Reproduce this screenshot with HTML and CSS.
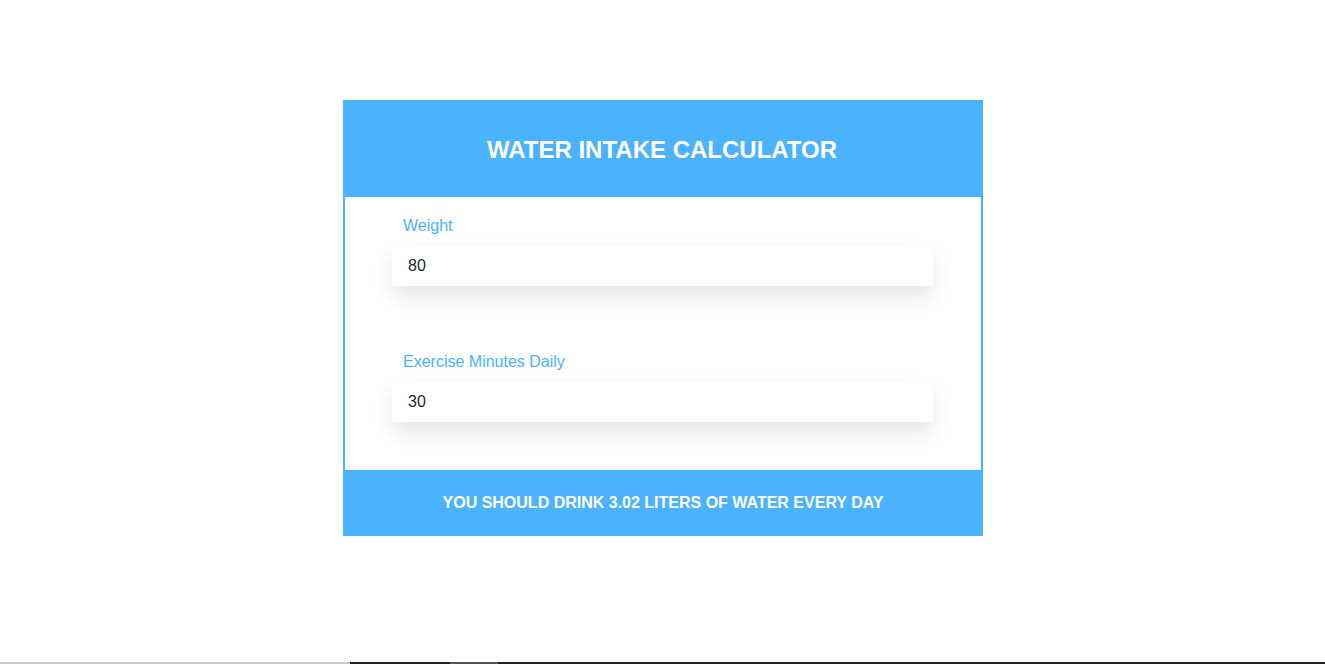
FILE: index.html
```html
<!DOCTYPE html>
<html lang="en">
<head>
<meta charset="utf-8">
<title>Water Intake Calculator</title>
<link rel="stylesheet" href="styles.css">
</head>
<body>
<div class="page">
  <main class="main">
    <section class="card">
      <header class="card-header">
        <h1 class="title">WATER INTAKE CALCULATOR</h1>
      </header>
      <form class="card-body">
        <div class="field">
          <label class="label" for="weight">Weight</label>
          <input class="input" id="weight" type="text" value="80">
        </div>
        <div class="field">
          <label class="label" for="exercise">Exercise Minutes Daily</label>
          <input class="input" id="exercise" type="text" value="30">
        </div>
      </form>
      <footer class="card-footer">
        <p class="result">YOU SHOULD DRINK 3.02 LITERS OF WATER EVERY DAY</p>
      </footer>
    </section>
  </main>
  <div class="strip">
    <div class="strip-a"></div>
    <div class="strip-b"></div>
    <div class="strip-c"></div>
    <div class="strip-d"></div>
  </div>
</div>
</body>
</html>
```

FILE: styles.css
```css
* { box-sizing: border-box; }
html, body { margin: 0; padding: 0; background: #fff; }
body { font-family: "Liberation Sans", Arial, sans-serif; }
.page {
  height: 664px;
  display: flex;
  flex-direction: column;
}
.main {
  flex: 1;
  display: flex;
  justify-content: center;
  padding-top: 100px;
}
.card {
  width: 640px;
  margin-left: 1px;
  display: flex;
  flex-direction: column;
  align-self: flex-start;
}
.card-header {
  background: #4bb2fe;
  height: 97px;
  display: flex;
  align-items: center;
  justify-content: center;
}
.title {
  margin: 0;
  color: #fff;
  font-size: 24px;
  font-weight: bold;
  line-height: 28px;
  padding-top: 2px;
  padding-right: 2px;
}
.card-body {
  margin: 0;
  border-left: 2px solid #4bb2fe;
  border-right: 2px solid #4bb2fe;
  padding: 20px 48px 48px 47px;
  display: flex;
  flex-direction: column;
  gap: 67px;
}
.field {
  display: flex;
  flex-direction: column;
  gap: 12px;
}
.label {
  color: #4bb2fe;
  font-size: 16px;
  line-height: 18px;
  padding-left: 11px;
}
.input {
  height: 39px;
  width: 541px;
  border: none;
  outline: none;
  background: #fff;
  padding: 0 16px 1px;
  font-family: "Liberation Sans", Arial, sans-serif;
  font-size: 16px;
  color: #1d2731;
  box-shadow: 0 10px 22px rgba(0, 0, 0, 0.11);
}
.card-footer {
  background: #4bb2fe;
  height: 66px;
  display: flex;
  align-items: center;
  justify-content: center;
}
.result {
  margin: 0;
  color: #fff;
  font-size: 16px;
  font-weight: bold;
  line-height: 18px;
}
.strip {
  height: 2px;
  display: flex;
}
.strip-a { width: 350px; background: #c8c8c8; }
.strip-b { width: 100px; background: #222; }
.strip-c { width: 48px; background: #555; }
.strip-d { flex: 1; background: #222; }
```
